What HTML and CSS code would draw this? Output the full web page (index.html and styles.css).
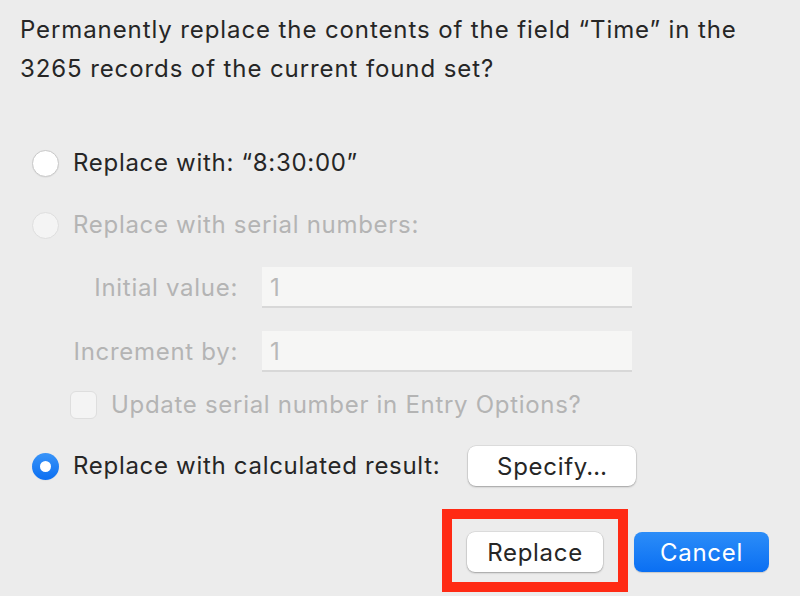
FILE: index.html
```html
<!DOCTYPE html>
<html>
<head>
<meta charset="utf-8">
<link rel="stylesheet" href="styles.css">
</head>
<body>
<div class="dialog">
  <p class="message">Permanently replace the contents of the field “Time” in the 3265 records of the current found set?</p>

  <div class="options">
    <div class="row row-first">
      <span class="radio"></span>
      <span class="label">Replace with: “8:30:00”</span>
    </div>
    <div class="row row-serial disabled">
      <span class="radio radio-disabled"></span>
      <span class="label">Replace with serial numbers:</span>
    </div>
    <div class="field field-initial disabled">
      <span class="field-label">Initial value:</span>
      <span class="input">1</span>
    </div>
    <div class="field field-increment disabled">
      <span class="field-label">Increment by:</span>
      <span class="input">1</span>
    </div>
    <div class="check-row disabled">
      <span class="checkbox"></span>
      <span class="label">Update serial number in Entry Options?</span>
    </div>
    <div class="row row-calc">
      <span class="radio radio-checked"></span>
      <span class="label">Replace with calculated result:</span>
      <span class="button specify">Specify…</span>
    </div>
  </div>

  <div class="actions">
    <div class="highlight">
      <span class="button replace">Replace</span>
    </div>
    <span class="button primary">Cancel</span>
  </div>
</div>
</body>
</html>
```

FILE: styles.css
```css
html, body {
  margin: 0;
  padding: 0;
  background: #ececec;
}

body {
  width: 800px;
  height: 596px;
  overflow: hidden;
  font-family: Inter, "Liberation Sans", sans-serif;
  color: #262626;
  letter-spacing: 0.7px;
}

.dialog {
  padding: 0 31px 0 20px;
}

.message {
  margin: 0;
  padding-top: 10px;
  font-size: 24px;
  line-height: 39px;
  width: 750px;
  letter-spacing: 0.9px;
}

.options {
  padding-left: 12px;
  display: flex;
  flex-direction: column;
}

.row {
  display: flex;
  align-items: center;
  height: 40px;
}

.row-first { margin-top: 55px; }
.row-serial { margin-top: 22px; }
.row-calc { margin-top: 27px; }

.label {
  font-size: 24px;
  line-height: 30px;
}

.disabled { color: #b4b4b4; }

.radio {
  width: 27px;
  height: 27px;
  box-sizing: border-box;
  border-radius: 50%;
  background: #fff;
  border: 1px solid #c9c9c9;
  box-shadow: 0 0.5px 1px rgba(0,0,0,0.08);
  margin-right: 14px;
  flex: none;
}

.radio-disabled {
  background: #f4f4f4;
  border-color: #dedede;
  box-shadow: none;
}

.radio-checked {
  border: none;
  background: linear-gradient(#3994f8, #0b6ff2);
  display: flex;
  align-items: center;
  justify-content: center;
}

.radio-checked::after {
  content: "";
  width: 11px;
  height: 11px;
  border-radius: 50%;
  background: #fff;
}

.field {
  display: flex;
  align-items: center;
  height: 41px;
}

.field-initial { margin-top: 22px; }
.field-increment { margin-top: 23px; }

.field-label {
  width: 218px;
  text-align: right;
  font-size: 24px;
  margin-left: -12px;
  margin-right: 24px;
}

.input {
  width: 370px;
  height: 41px;
  box-sizing: border-box;
  background: #f6f6f5;
  border-bottom: 2px solid #d8d8d8;
  font-size: 24px;
  line-height: 41px;
  padding-left: 8px;
  color: #b8b8b8;
}

.check-row {
  display: flex;
  align-items: center;
  height: 29px;
  margin-top: 18px;
  padding-left: 38px;
}

.checkbox {
  width: 27px;
  height: 28px;
  box-sizing: border-box;
  border-radius: 6px;
  background: #f4f4f4;
  border: 1px solid #dedede;
  margin-right: 14px;
  flex: none;
}

.button {
  display: inline-flex;
  align-items: center;
  justify-content: center;
  height: 40px;
  box-sizing: border-box;
  background: #fff;
  border-radius: 8px;
  box-shadow: 0 0 0 0.5px rgba(0,0,0,0.12), 0 1px 2px rgba(0,0,0,0.28);
  font-size: 24px;
  color: #262626;
}

.specify {
  width: 168px;
  margin-left: 28px;
}

.actions {
  display: flex;
  justify-content: flex-end;
  align-items: flex-start;
  margin-top: 23px;
}

.highlight {
  border: 10px solid #ff2a14;
  padding: 13px 15px 10px;
}

.replace { width: 136px; }

.primary {
  width: 135px;
  margin-left: 6px;
  margin-top: 23px;
  color: #fff;
  background: linear-gradient(#2c8df8, #0a6ff3);
  box-shadow: 0 1px 1px rgba(0,0,0,0.15);
}
```
